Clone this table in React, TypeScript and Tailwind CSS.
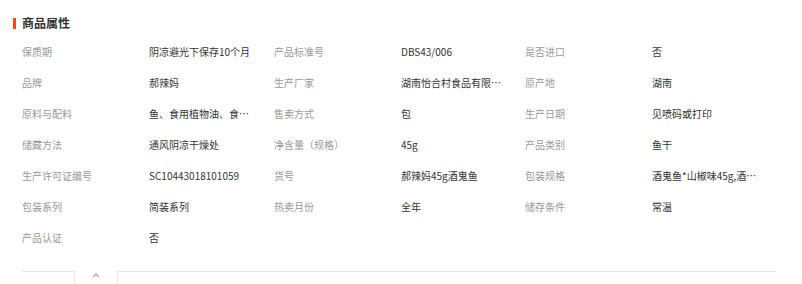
import React from "react";

const rows: [string, string][][] = [
  [["保质期", "阴凉避光下保存10个月"], ["产品标准号", "DBS43/006"], ["是否进口", "否"]],
  [["品牌", "郝辣妈"], ["生产厂家", "湖南怡合村食品有限公司"], ["原产地", "湖南"]],
  [["原料与配料", "鱼、食用植物油、食用盐、白砂糖"], ["售卖方式", "包"], ["生产日期", "见喷码或打印"]],
  [["储藏方法", "通风阴凉干燥处"], ["净含量（规格）", "45g"], ["产品类别", "鱼干"]],
  [["生产许可证编号", "SC10443018101059"], ["货号", "郝辣妈45g酒鬼鱼"], ["包装规格", "酒鬼鱼*山椒味45g,酒鬼鱼*香辣味45g"]],
  [["包装系列", "简装系列"], ["热卖月份", "全年"], ["储存条件", "常温"]],
  [["产品认证", "否"]],
];

export default function App() {
  return (
    <div
      className="w-[802px] h-[284px] bg-white overflow-hidden"
      style={{ fontFamily: '"Noto Sans CJK SC", "Noto Sans", sans-serif' }}
    >
      <div className="flex items-center h-[20px] mt-[13px] pl-[13px]">
        <div className="w-[3px] h-[11px] bg-[#ff4a00]" />
        <div className="ml-[6px] text-[12px] leading-[20px] font-bold text-[#333]">商品属性</div>
      </div>
      <div className="mt-[3px] ml-[22px] grid grid-cols-[127px_125px_127px_124px_127px_124px]">
        {rows.map((r, i) => (
          <React.Fragment key={i}>
            {[0, 1, 2].map((j) => {
              const c = r[j];
              return (
                <React.Fragment key={j}>
                  <div className="h-[31px] flex items-center text-[10px] text-[#999] whitespace-nowrap">
                    {c ? c[0] : ""}
                  </div>
                  <div className="h-[31px] flex items-center text-[10px] text-[#333] min-w-0">
                    <span className="block max-w-[106px] truncate">{c ? c[1] : ""}</span>
                  </div>
                </React.Fragment>
              );
            })}
          </React.Fragment>
        ))}
      </div>
      <div className="mt-[18px] ml-[22px] w-[754px] flex h-[20px]">
        <div className="w-[53px] border-t border-r border-[#e5e5e5]" />
        <div className="w-[42px] flex justify-center pt-[2px]">
          <svg width="8" height="5" viewBox="0 0 8 5" fill="none">
            <path d="M1 4 L4 1 L7 4" stroke="#9aa0aa" strokeWidth="1.1" />
          </svg>
        </div>
        <div className="flex-1 border-t border-l border-[#e5e5e5]" />
      </div>
    </div>
  );
}
